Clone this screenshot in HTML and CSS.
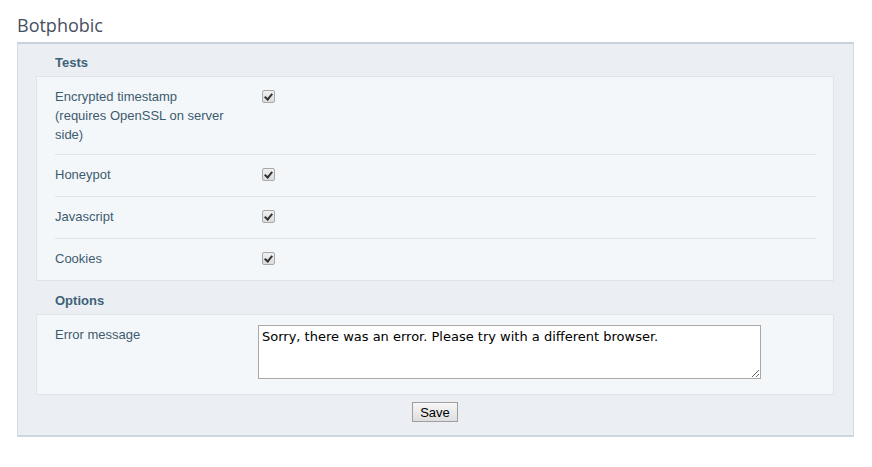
FILE: index.html
```html
<!DOCTYPE html>
<html>
<head>
<meta charset="utf-8">
<link rel="stylesheet" href="styles.css">
</head>
<body>
<h1 class="title">Botphobic</h1>
<form class="box">
  <h2 class="section-title">Tests</h2>
  <div class="panel">
    <div class="row">
      <div class="label">Encrypted timestamp<br>(requires OpenSSL on server<br>side)</div>
      <div class="field"><span class="check"></span></div>
    </div>
    <div class="row">
      <div class="label">Honeypot</div>
      <div class="field"><span class="check"></span></div>
    </div>
    <div class="row">
      <div class="label">Javascript</div>
      <div class="field"><span class="check"></span></div>
    </div>
    <div class="row">
      <div class="label">Cookies</div>
      <div class="field"><span class="check"></span></div>
    </div>
  </div>
  <h2 class="section-title section-title-next">Options</h2>
  <div class="panel">
    <div class="row row-text">
      <div class="label">Error message</div>
      <div class="field field-text"><textarea class="textarea">Sorry, there was an error. Please try with a different browser.</textarea></div>
    </div>
  </div>
  <div class="actions"><button type="button" class="btn">Save</button></div>
</form>
</body>
</html>
```
FILE: styles.css
```css
html, body {
  margin: 0;
  padding: 0;
  background: #ffffff;
}
body {
  padding: 0 18px 0 17px;
  font-family: "Liberation Sans", Arial, sans-serif;
}
.title {
  margin: 0;
  padding: 13px 0 0 0;
  height: 29px;
  font-family: "Open Sans", sans-serif;
  font-weight: 400;
  font-size: 18px;
  line-height: 24px;
  color: #465060;
}
.box {
  margin: 0;
  background: #ebeff4;
  border: 1px solid #d3dae2;
  border-top: 2px solid #c8d1db;
  border-bottom: 2px solid #cdd5de;
  padding: 0 19px 0 18px;
}
.section-title {
  margin: 0;
  padding: 11px 0 0 19px;
  height: 21px;
  font-size: 13px;
  line-height: 16px;
  font-weight: bold;
  color: #3e6276;
}
.section-title-next {
  padding-top: 12px;
}
.panel {
  background: #f4f7fa;
  border: 1px solid #dde4ec;
  padding: 0 17px 0 18px;
}
.row {
  display: flex;
  border-top: 1px solid #dce3ea;
  padding: 10px 0;
  min-height: 21px;
}
.row:first-child {
  border-top: 0;
}
.label {
  width: 203px;
  font-size: 13px;
  line-height: 19px;
  color: #3d5b6e;
}
.field {
  display: flex;
  align-items: flex-start;
  padding-top: 3px;
  padding-left: 4px;
}
.check {
  display: block;
  width: 11px;
  height: 11px;
  border: 1px solid #a9a9a9;
  border-radius: 2px;
  background: linear-gradient(#f0f0f0, #dcdcdc);
  position: relative;
}
.check::after {
  content: "";
  position: absolute;
  left: 3px;
  top: 1px;
  width: 3px;
  height: 6px;
  border: solid #333;
  border-width: 0 2px 2px 0;
  transform: rotate(40deg);
}
.row-text {
  padding-top: 10px;
  padding-bottom: 15px;
}
.field-text {
  padding: 0;
}
.textarea {
  display: block;
  width: 503px;
  height: 54px;
  box-sizing: border-box;
  margin: 0;
  border: 1px solid #a9a9a9;
  padding: 2px 3px;
  font-family: "DejaVu Sans", Verdana, sans-serif;
  font-size: 13px;
  line-height: 17px;
  color: #000;
  background: #fff;
}
.actions {
  display: flex;
  justify-content: center;
  padding: 7px 0 13px;
}
.btn {
  height: 20px;
  padding: 0 7px;
  font-family: "Liberation Sans", Arial, sans-serif;
  font-size: 13px;
  border: 1px solid #9e9e9e;
  border-radius: 0;
  background: linear-gradient(#f6f6f6, #dedede);
  color: #000;
}
```
